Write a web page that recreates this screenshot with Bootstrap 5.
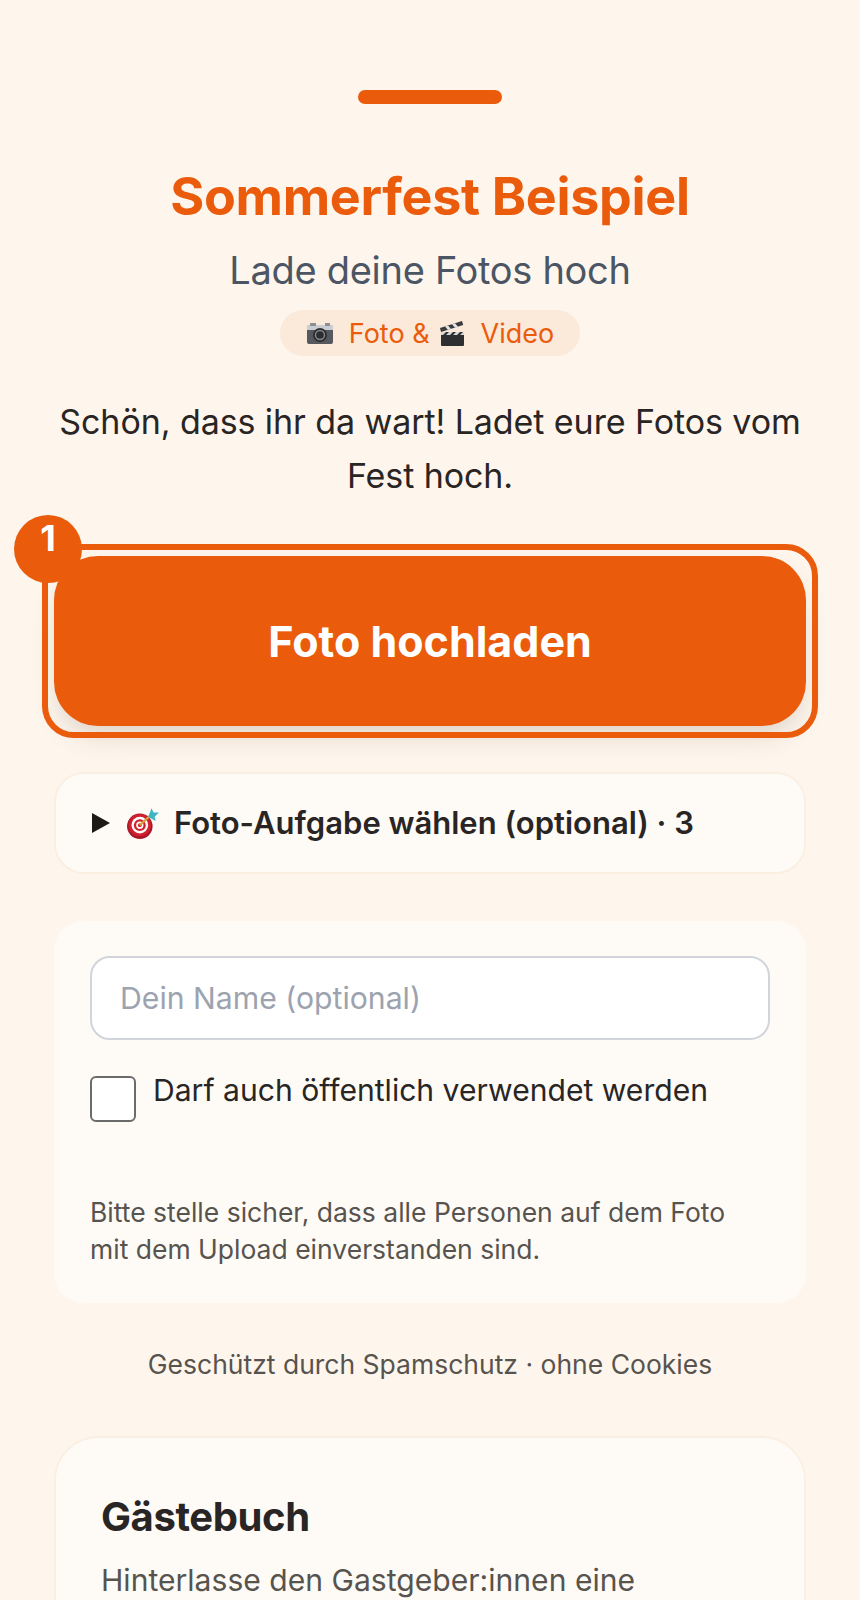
<!DOCTYPE html>
<html lang="de">
<head>
  <meta charset="UTF-8">
  <meta name="viewport" content="width=device-width, initial-scale=1.0">
  <title>Sommerfest Beispiel</title>
  <link href="https://cdn.jsdelivr.net/npm/bootstrap@5.3.2/dist/css/bootstrap.min.css" rel="stylesheet">
  <style>
    html, body { background: #fef6ed; }
    body { font-family: Inter, "Liberation Sans", sans-serif; color: #292524; }
    .page-wrap { height: 1600px; overflow: hidden; padding: 90px 54px 0; }
    .top-bar { width: 144px; height: 14px; background: #ea5c0c; border-radius: 7px; margin: 0 auto 63px; }
    .fest-title { font-size: 52px; line-height: 60px; font-weight: 700; letter-spacing: -.32px; color: #ea5c0c; margin: 0 0 20px; }
    .fest-sub { font-size: 38px; line-height: 46px; letter-spacing: -.3px; color: #4b5563; margin: 0 0 17px; }
    .type-pill { display: inline-flex; align-items: center; height: 46px; padding: 0 26px; border-radius: 23px; background: #fbe9da; color: #ea5c0c; font-size: 27px; line-height: 1; }
    .type-pill svg { width: 28px; height: 28px; margin: 0 15px 0 0; }
    .type-pill .amp { margin-right: 8px; }
    .intro-text { font-size: 34px; line-height: 54px; letter-spacing: -.08px; margin: 39px -20px 53px; }
    .upload-wrap { position: relative; margin-bottom: 46px; }
    .upload-wrap::after { content: ""; position: absolute; inset: -12px; border: 6px solid #ea5c0c; border-radius: 32px; pointer-events: none; }
    .upload-btn { display: block; width: 100%; height: 170px; border: 0; border-radius: 44px; background: #ea5c0c; color: #fff; font-size: 43px; font-weight: 700; box-shadow: 0 14px 28px -6px rgba(60, 40, 20, .18); }
    .upload-btn:hover, .upload-btn:active { background: #ea5c0c !important; color: #fff !important; }
    .step-num { position: absolute; z-index: 1; left: -40px; top: -41px; width: 68px; height: 68px; border-radius: 50%; background: #ea5c0c; color: #fff; font-size: 36px; font-weight: 700; display: flex; justify-content: center; line-height: 46px; }
    .task-box { background: #fefbf6; border: 2px solid #fbefe2; border-radius: 30px; height: 102px; margin-bottom: 47px; }
    .task-box summary { display: flex; align-items: center; height: 98px; padding: 0 36px; font-size: 31px; font-weight: 600; list-style: none; }
    .task-box .arrow { width: 18px; height: 20px; margin-right: 16px; }
    .task-box .dart { width: 34px; height: 34px; margin-right: 14px; }
    .form-box { background: #fefbf6; border-radius: 30px; padding: 35px 36px; margin-bottom: 43px; height: 382px; }
    .name-input.form-control { height: 84px; border: 2px solid #d1d5db; border-radius: 20px; padding: 0 28px; font-size: 30.200px; background: #fff; font-family: inherit; margin-bottom: 36px; }
    .name-input::placeholder { color: #9ca3af; }
    .check-row { margin-bottom: 72px; }
    .public-check.form-check-input { width: 46px; height: 46px; margin: 0 17px 0 0; flex: none; border: 2px solid #6b6b6b; border-radius: 6px; }
    .check-text { font-size: 30.100px; line-height: 29px; }
    .hint-text { font-size: 26.500px; line-height: 36.500px; color: #57534e; margin: 0; max-width: 660px; }
    .spam-note { font-size: 26.500px; line-height: 36px; color: #57534e; margin-bottom: 54px; }
    .guest-card.card { background: #fefbf6; border: 2px solid #fbefe2; border-radius: 44px; padding: 54px 45px; }
    .guest-title { font-size: 40px; line-height: 50px; font-weight: 700; letter-spacing: -.4px; margin: 0 0 16px; }
    .guest-text { font-size: 30.100px; line-height: 44px; color: #57534e; margin: 0; }
  </style>
</head>
<body>
  <div class="page-wrap">
    <div class="top-bar"></div>

    <div class="text-center">
      <h1 class="fest-title">Sommerfest Beispiel</h1>
      <p class="fest-sub">Lade deine Fotos hoch</p>
      <span class="type-pill">
        <!-- camera -->
        <svg viewBox="0 0 28 28"><rect x="1" y="6" width="26" height="19" rx="2" fill="#55585c"/><rect x="1" y="6" width="26" height="5" fill="#c9ccd0"/><rect x="4" y="4" width="6" height="3" fill="#8b8e92"/><rect x="19" y="4" width="5" height="3" fill="#8b8e92"/><circle cx="14" cy="16" r="7" fill="#2b2d30"/><circle cx="14" cy="16" r="4.500" fill="none" stroke="#85888c" stroke-width="1.400"/></svg>
        <span class="amp">Foto &amp;</span>
        <!-- clapper -->
        <svg viewBox="0 0 28 28"><rect x="3" y="13" width="23" height="14" rx="1" fill="#2e2f31"/><path d="M3 13h23v3H3z" fill="#d9d9d9"/><path d="M8 13l-3 3h3l3-3zM15 13l-3 3h3l3-3zM22 13l-3 3h3l3-3z" fill="#2e2f31"/><path d="M2 9 24 2l1.200 4L3 13z" fill="#3a3b3d"/><path d="M7 7.400l3 3.600 3-1-3-3.600zM14 5.200l3 3.600 3-1-3-3.600z" fill="#e4e4e4"/></svg>
        <span>Video</span>
      </span>
      <p class="intro-text">Schön, dass ihr da wart! Ladet eure Fotos vom Fest hoch.</p>
    </div>

    <div class="upload-wrap">
      <button type="button" class="btn upload-btn">Foto hochladen</button>
      <span class="step-num">1</span>
    </div>

    <details class="task-box">
      <summary>
        <svg class="arrow" viewBox="0 0 18 20"><path d="M0 0l18 10L0 20z" fill="#1c1917"/></svg>
        <svg class="dart" viewBox="0 0 32 32"><circle cx="13" cy="19" r="12" fill="#a81828"/><circle cx="13" cy="18" r="10.500" fill="#d3202f"/><circle cx="13" cy="18" r="7.800" fill="#fff"/><circle cx="13" cy="18" r="5.600" fill="#d3202f"/><circle cx="13" cy="18" r="3.400" fill="#fff"/><circle cx="13" cy="18" r="1.800" fill="#d3202f"/><path d="M13 18 24 8" stroke="#d8a23a" stroke-width="2"/><path d="M21 10l3-8 2 4 5 0-4 4 1 4-4-2z" fill="#3fb5c4"/></svg>
        <span>Foto-Aufgabe wählen (optional) · 3</span>
      </summary>
    </details>

    <div class="form-box">
      <input type="text" class="form-control name-input" placeholder="Dein Name (optional)">
      <div class="d-flex check-row">
        <input type="checkbox" class="form-check-input public-check" id="publicOk">
        <label class="check-text" for="publicOk">Darf auch öffentlich verwendet werden</label>
      </div>
      <p class="hint-text">Bitte stelle sicher, dass alle Personen auf dem Foto mit dem Upload einverstanden sind.</p>
    </div>

    <div class="spam-note text-center">Geschützt durch Spamschutz · ohne Cookies</div>

    <div class="card guest-card">
      <h2 class="guest-title">Gästebuch</h2>
      <p class="guest-text">Hinterlasse den Gastgeber:innen eine</p>
    </div>
  </div>

  <script src="https://cdn.jsdelivr.net/npm/bootstrap@5.3.2/dist/js/bootstrap.bundle.min.js"></script>
</body>
</html>
